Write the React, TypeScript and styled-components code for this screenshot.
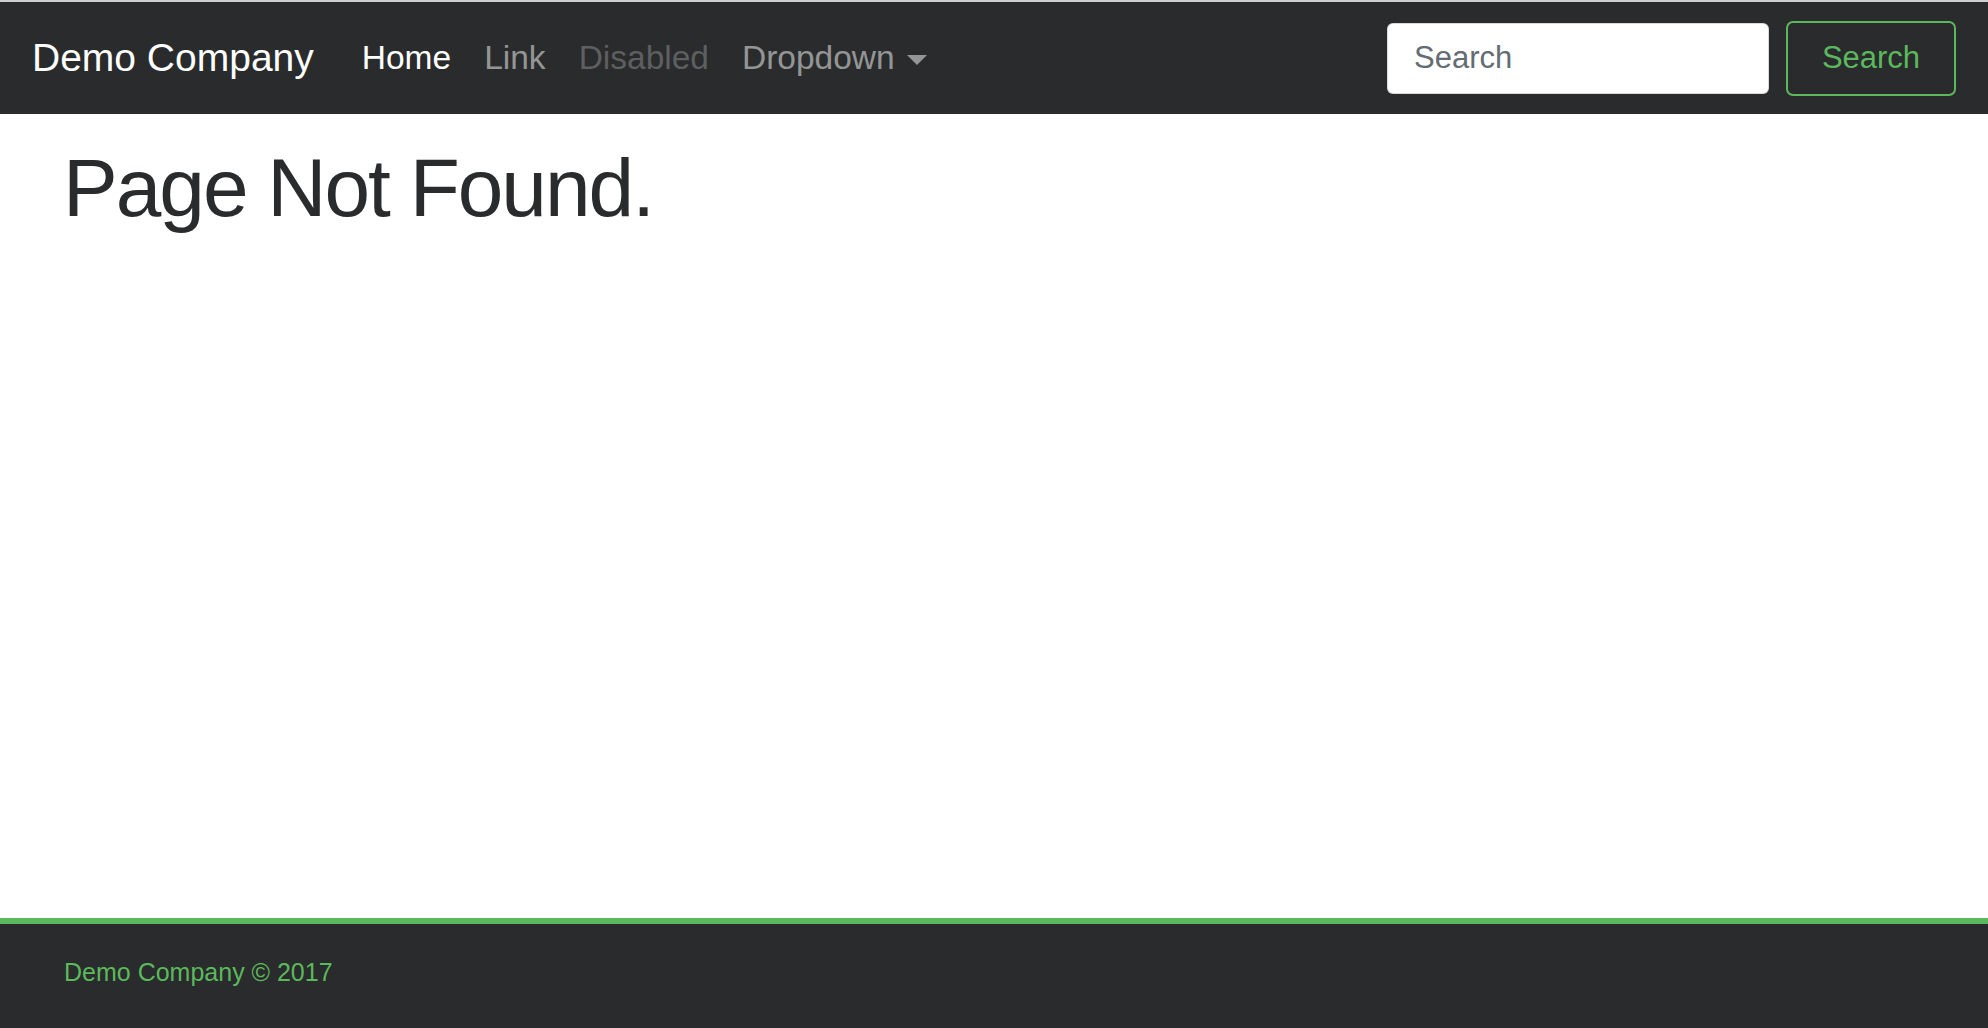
import React from "react";
import styled, { createGlobalStyle } from "styled-components";

const GlobalStyle = createGlobalStyle`
  html, body {
    margin: 0;
    padding: 0;
    height: 100%;
    background: #ffffff;
    font-family: "Liberation Sans", Arial, sans-serif;
  }
  #root {
    min-height: 100vh;
    display: flex;
    flex-direction: column;
  }
  * { box-sizing: border-box; }
`;

const Navbar = styled.nav`
  display: flex;
  align-items: center;
  height: 114px;
  border-top: 2px solid #cfcfcf;
  background: #292b2c;
  padding: 0 32px;
`;

const Brand = styled.a`
  font-size: 39px;
  color: #ffffff;
  text-decoration: none;
  margin-right: 48px;
`;

const NavList = styled.ul`
  display: flex;
  align-items: center;
  gap: 33px;
  list-style: none;
  margin: 0;
  padding: 0;
`;

const NavLink = styled.a<{ $tone: "active" | "normal" | "disabled" }>`
  display: flex;
  align-items: center;
  gap: 12px;
  font-size: 33.5px;
  text-decoration: none;
  color: ${(p) =>
    p.$tone === "active"
      ? "#ffffff"
      : p.$tone === "disabled"
      ? "rgba(255,255,255,0.25)"
      : "rgba(255,255,255,0.5)"};
`;

const Caret = styled.span`
  display: inline-block;
  width: 0;
  height: 0;
  border-left: 10px solid transparent;
  border-right: 10px solid transparent;
  border-top: 10px solid currentColor;
  margin-top: 4px;
`;

const SearchForm = styled.form`
  display: flex;
  align-items: center;
  gap: 17px;
  margin-left: auto;
`;

const SearchInput = styled.input`
  width: 382px;
  height: 71px;
  border: 1px solid rgba(0, 0, 0, 0.15);
  border-radius: 6px;
  background: #ffffff;
  padding: 0 26px;
  font-family: "Liberation Sans", Arial, sans-serif;
  font-size: 31px;
  color: #464a4c;
  outline: none;
  &::placeholder {
    color: #636c72;
  }
`;

const SearchButton = styled.button`
  width: 170px;
  height: 75px;
  border: 2px solid #5cb85c;
  border-radius: 7px;
  background: transparent;
  color: #5cb85c;
  font-family: "Liberation Sans", Arial, sans-serif;
  font-size: 31px;
  cursor: pointer;
`;

const Main = styled.main`
  flex: 1;
  padding: 29px 63px 0;
`;

const Heading = styled.h1`
  margin: 0;
  font-size: 82px;
  font-weight: 400;
  line-height: 1.1;
  letter-spacing: -2px;
  color: #292b2c;
`;

const Footer = styled.footer`
  display: flex;
  align-items: center;
  height: 110px;
  border-top: 6px solid #5cb85c;
  background: #292b2c;
  padding: 0 63px 8px 64px;
`;

const FooterText = styled.span`
  font-size: 25px;
  color: #5cb85c;
`;

export default function App() {
  return (
    <>
      <GlobalStyle />
      <Navbar>
        <Brand href="#">Demo Company</Brand>
        <NavList>
          <li>
            <NavLink href="#" $tone="active">Home</NavLink>
          </li>
          <li>
            <NavLink href="#" $tone="normal">Link</NavLink>
          </li>
          <li>
            <NavLink href="#" $tone="disabled">Disabled</NavLink>
          </li>
          <li>
            <NavLink href="#" $tone="normal">
              Dropdown
              <Caret />
            </NavLink>
          </li>
        </NavList>
        <SearchForm onSubmit={(e) => e.preventDefault()}>
          <SearchInput type="text" placeholder="Search" />
          <SearchButton type="submit">Search</SearchButton>
        </SearchForm>
      </Navbar>
      <Main>
        <Heading>Page Not Found.</Heading>
      </Main>
      <Footer>
        <FooterText>Demo Company © 2017</FooterText>
      </Footer>
    </>
  );
}
